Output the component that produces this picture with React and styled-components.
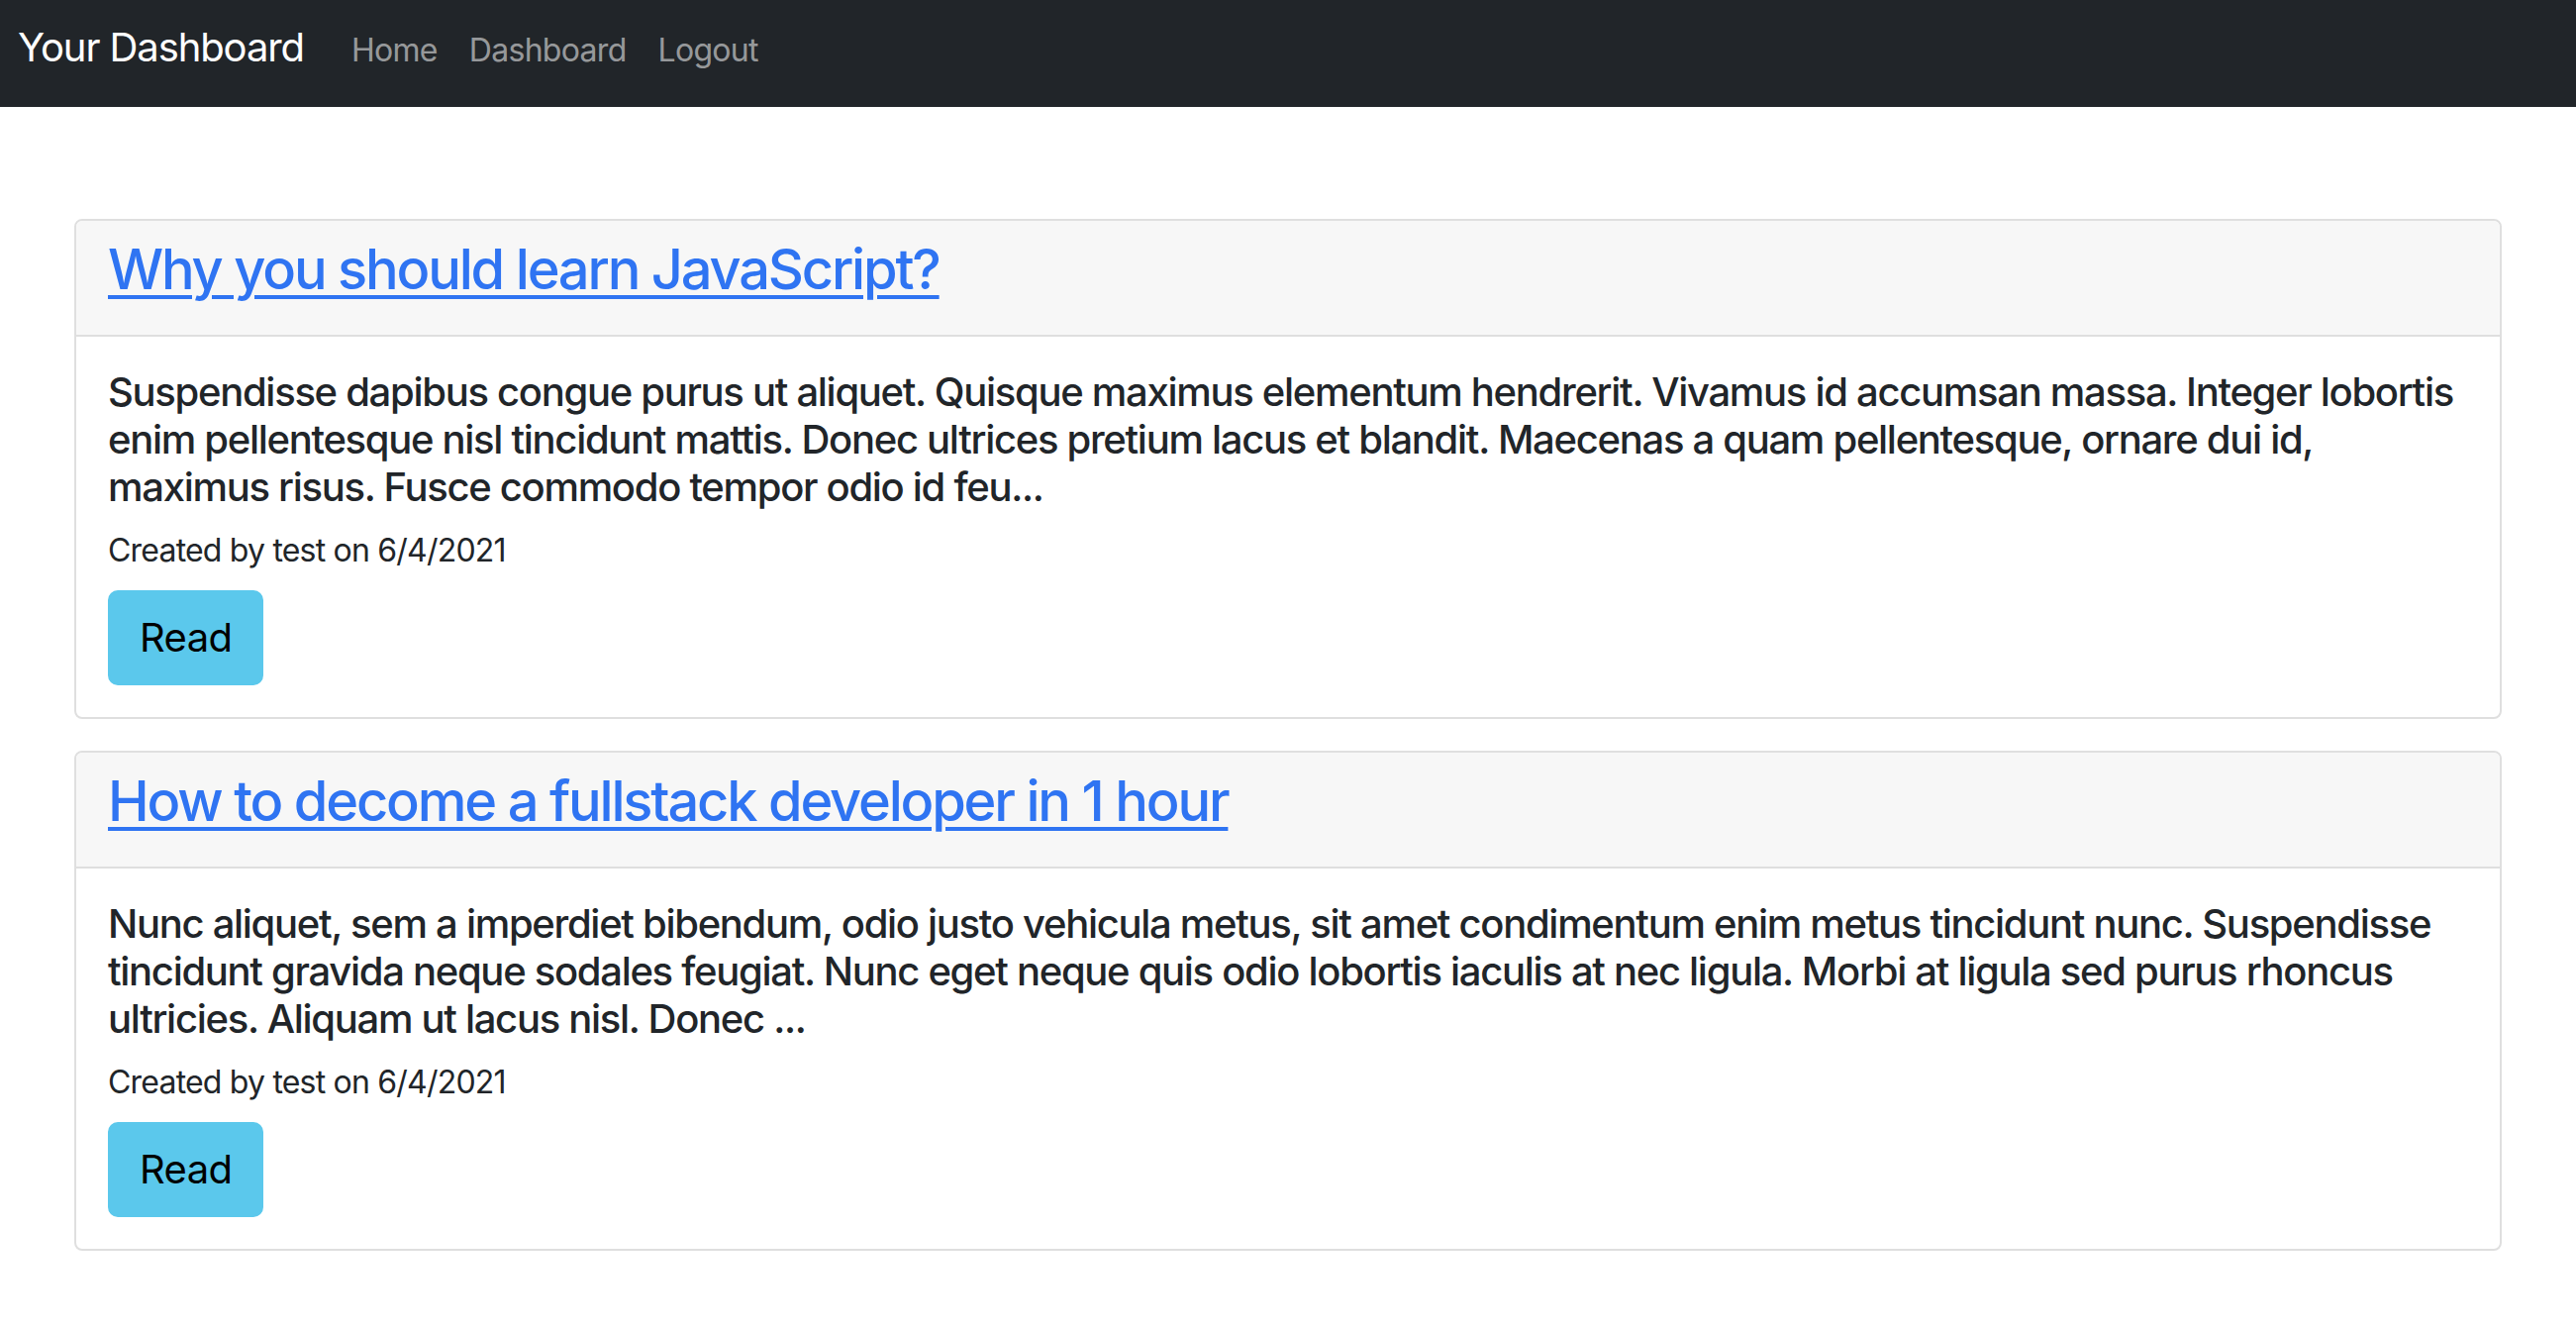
import React from 'react';
import styled, { createGlobalStyle } from 'styled-components';

const posts = [
    {
        id: 1,
        title: 'Why you should learn JavaScript?',
        body: 'Suspendisse dapibus congue purus ut aliquet. Quisque maximus elementum hendrerit. Vivamus id accumsan massa. Integer lobortis enim pellentesque nisl tincidunt mattis. Donec ultrices pretium lacus et blandit. Maecenas a quam pellentesque, ornare dui id, maximus risus. Fusce commodo tempor odio id feu...',
        author: 'test',
        date: '6/4/2021',
    },
    {
        id: 2,
        title: 'How to decome a fullstack developer in 1 hour',
        body: 'Nunc aliquet, sem a imperdiet bibendum, odio justo vehicula metus, sit amet condimentum enim metus tincidunt nunc. Suspendisse tincidunt gravida neque sodales feugiat. Nunc eget neque quis odio lobortis iaculis at nec ligula. Morbi at ligula sed purus rhoncus ultricies. Aliquam ut lacus nisl. Donec ...',
        author: 'test',
        date: '6/4/2021',
    },
];

const App = () => {
    return (
        <>
            <GlobalStyle />
            <Navbar>
                <Brand href="/">Your Dashboard</Brand>
                <NavLinks>
                    <NavLink href="/">Home</NavLink>
                    <NavLink href="/dashboard">Dashboard</NavLink>
                    <NavLink href="/logout">Logout</NavLink>
                </NavLinks>
            </Navbar>
            <Main>
                {posts.map(post => (
                    <Card key={post.id}>
                        <CardHeader>
                            <CardTitle><a href={`/posts/${post.id}`}>{post.title}</a></CardTitle>
                        </CardHeader>
                        <CardBody>
                            <CardText>{post.body}</CardText>
                            <Meta>Created by {post.author} on {post.date}</Meta>
                            <ReadButton>Read</ReadButton>
                        </CardBody>
                    </Card>
                ))}
            </Main>
        </>
    )
}

export default App;

const GlobalStyle = createGlobalStyle`
    body {
        margin: 0;
        background: #fff;
        color: #212529;
        font-family: Inter, "Noto Sans", sans-serif;
    }
    * {
        box-sizing: border-box;
    }
`;

const Navbar = styled.nav`
    display: flex;
    align-items: baseline;
    height: 108px;
    padding: 18px 18px 0;
    background-color: #212529;
`;

const Brand = styled.a`
    color: #fff;
    font-size: 40px;
    line-height: 60px;
    letter-spacing: -1.1px;
    text-decoration: none;
    margin-right: 32px;
`;

const NavLinks = styled.div`
    display: flex;
    align-items: baseline;
`;

const NavLink = styled.a`
    color: rgba(255, 255, 255, .55);
    font-size: 32px;
    line-height: 48px;
    letter-spacing: -0.7px;
    padding: 0 16px;
    text-decoration: none;
`;

const Main = styled.main`
    padding: 113px 75px 0;
`;

const Card = styled.div`
    border: 2px solid #dfdfdf;
    border-radius: 8px;
    margin-bottom: 32px;
    overflow: hidden;
`;

const CardHeader = styled.div`
    padding: 16px 32px;
    background-color: #f7f7f7;
    border-bottom: 2px solid #dfdfdf;
`;

const CardTitle = styled.h3`
    margin: 0 0 16px;
    font-size: 56px;
    font-weight: 500;
    line-height: 1.2;
    letter-spacing: -2.2px;

    a {
        color: #2f74f2;
        text-decoration: underline;
        text-decoration-thickness: 4px;
        text-underline-offset: 6px;
    }
`;

const CardBody = styled.div`
    padding: 32px;
`;

const CardText = styled.h5`
    margin: 0 0 16px;
    font-size: 40px;
    font-weight: 500;
    line-height: 48px;
    letter-spacing: -1.3px;
    color: #212529;
`;

const Meta = styled.p`
    margin: 0 0 16px;
    font-size: 32px;
    line-height: 48px;
    letter-spacing: -0.8px;
`;

const ReadButton = styled.button`
    display: inline-block;
    padding: 16px 30px;
    font-family: inherit;
    font-size: 40px;
    line-height: 60px;
    letter-spacing: -0.6px;
    color: #000;
    background-color: #5bc8ec;
    border: 2px solid #5bc8ec;
    border-radius: 10px;
    cursor: pointer;
`;
